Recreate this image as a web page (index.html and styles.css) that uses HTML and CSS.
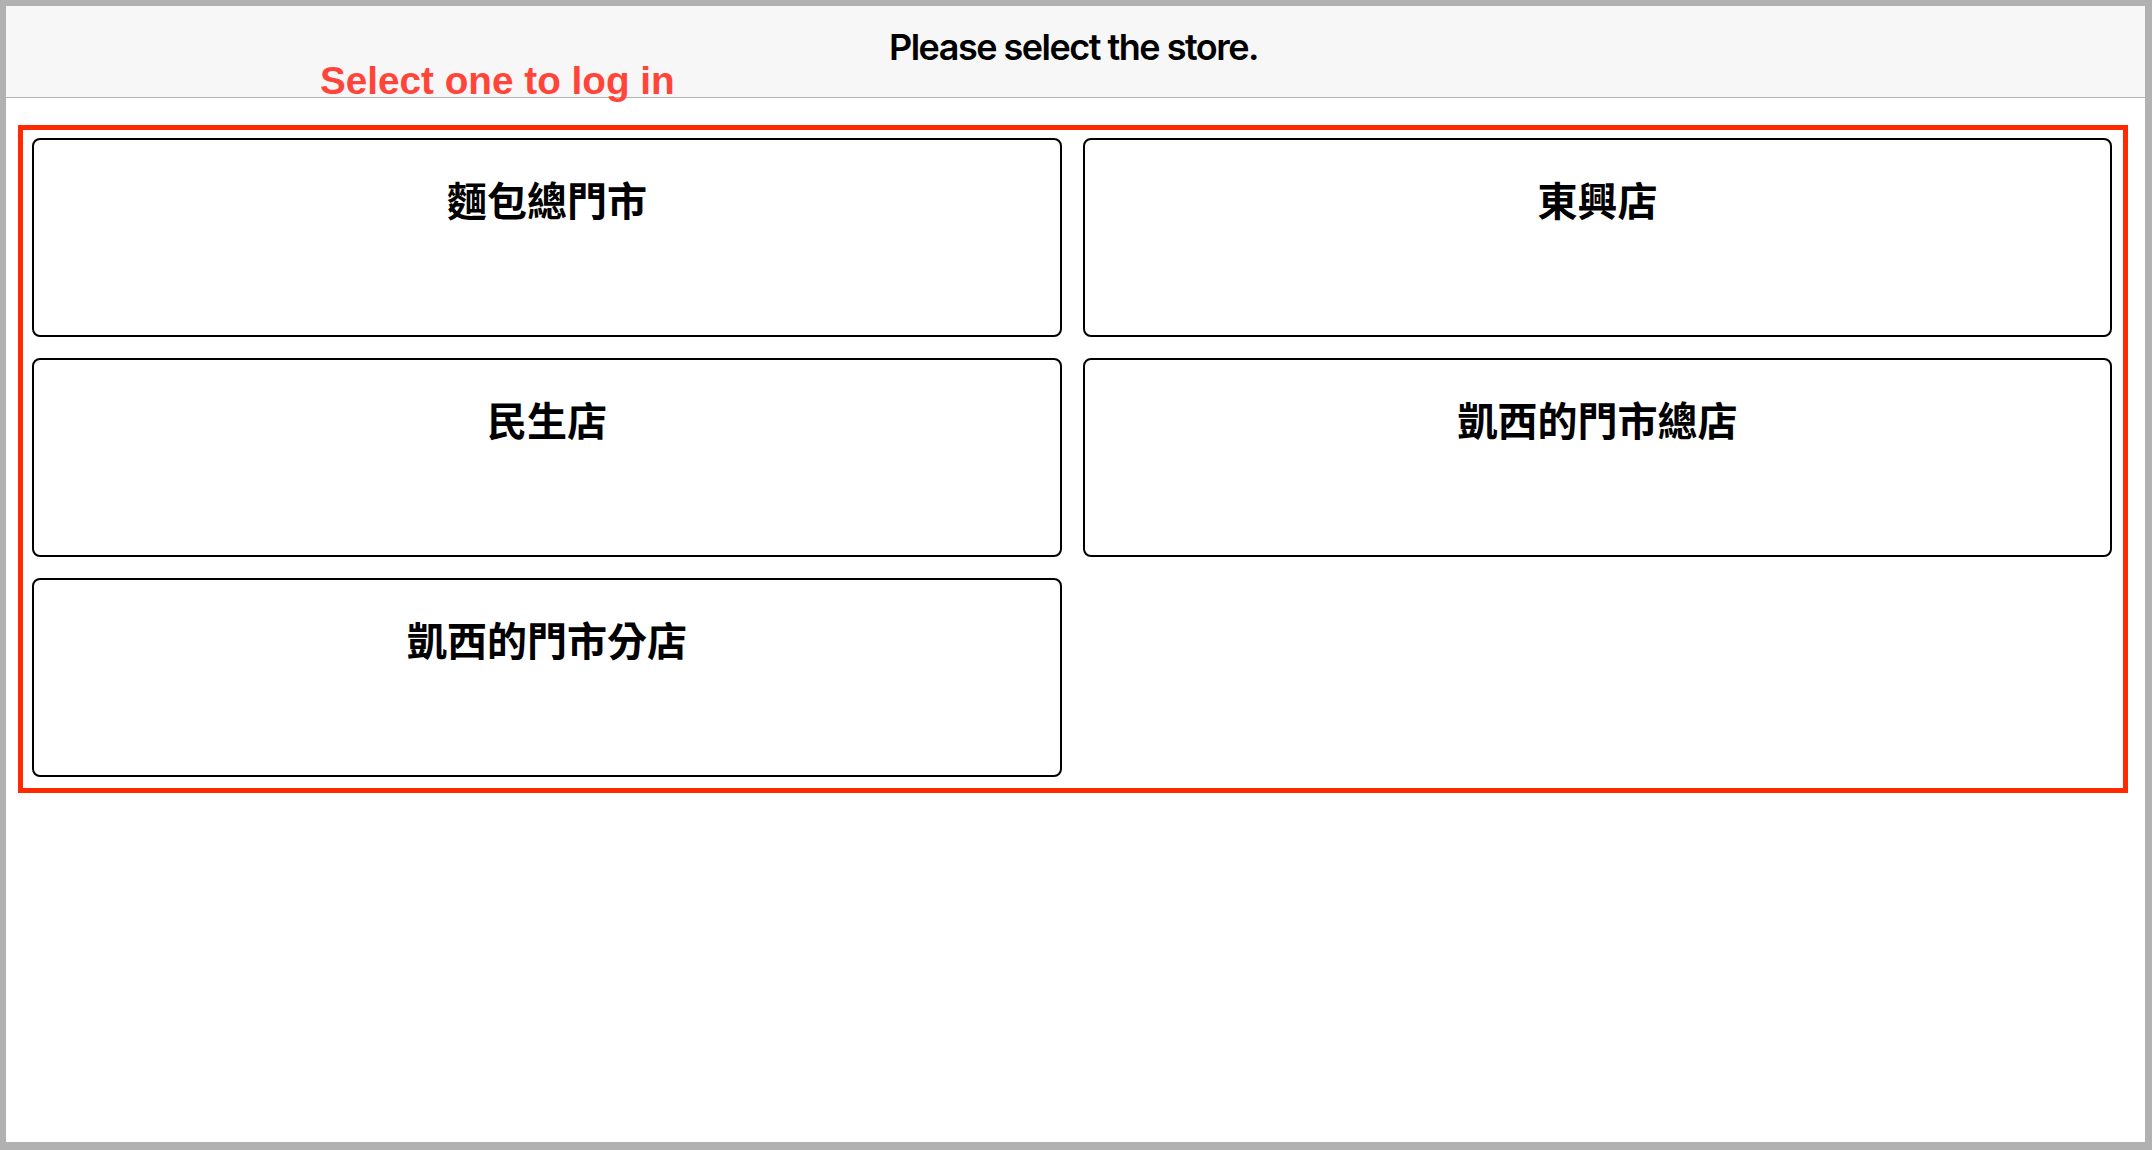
FILE: index.html
```html
<!DOCTYPE html>
<html lang="zh-Hant">
<head>
<meta charset="utf-8">
<title>Please select the store.</title>
<link rel="stylesheet" href="styles.css">
</head>
<body>
<div class="frame">
  <header class="header">
    <h1 class="title">Please select the store.</h1>
  </header>
  <div class="note">Select one to log in</div>
  <main class="stores">
    <div class="store"><span class="name">麵包總門市</span></div>
    <div class="store"><span class="name">東興店</span></div>
    <div class="store"><span class="name">民生店</span></div>
    <div class="store"><span class="name">凱西的門市總店</span></div>
    <div class="store"><span class="name">凱西的門市分店</span></div>
  </main>
</div>
</body>
</html>
```

FILE: styles.css
```css
html, body {
  margin: 0;
  padding: 0;
  background: #ffffff;
}

.frame {
  position: relative;
  box-sizing: border-box;
  width: 2152px;
  height: 1150px;
  border-style: solid;
  border-color: #b1b1b1;
  border-width: 6px 7px 8px 6px;
  background: #ffffff;
  overflow: hidden;
}

.header {
  height: 91px;
  background: #f7f7f7;
  border-bottom: 1px solid #b3b3b3;
  display: flex;
  justify-content: center;
}

.title {
  margin: 0 0 0 -4px;
  padding-top: 19px;
  font-family: Inter, "Liberation Sans", sans-serif;
  font-weight: 600;
  font-size: 36px;
  line-height: 44px;
  color: #000000;
  letter-spacing: -1.5px;
}

.note {
  position: absolute;
  left: 314px;
  top: 56px;
  font-family: "Liberation Sans", Arial, sans-serif;
  font-weight: 700;
  font-size: 38.7px;
  line-height: 38px;
  color: #ff453a;
  white-space: nowrap;
}

.stores {
  margin: 27px 17px 0 12px;
  border: 5px solid #ff2a00;
  padding: 8px 11px 11px 9px;
  display: grid;
  grid-template-columns: 1030px 1029px;
  grid-auto-rows: 199px;
  gap: 21px;
}

.store {
  box-sizing: border-box;
  border: 2px solid #000000;
  border-radius: 8px;
  padding-top: 35px;
  text-align: center;
}

.name {
  font-family: "Noto Sans CJK TC", "Noto Sans CJK SC", sans-serif;
  font-weight: 700;
  font-size: 40px;
  line-height: 48px;
  color: #000000;
}
```
